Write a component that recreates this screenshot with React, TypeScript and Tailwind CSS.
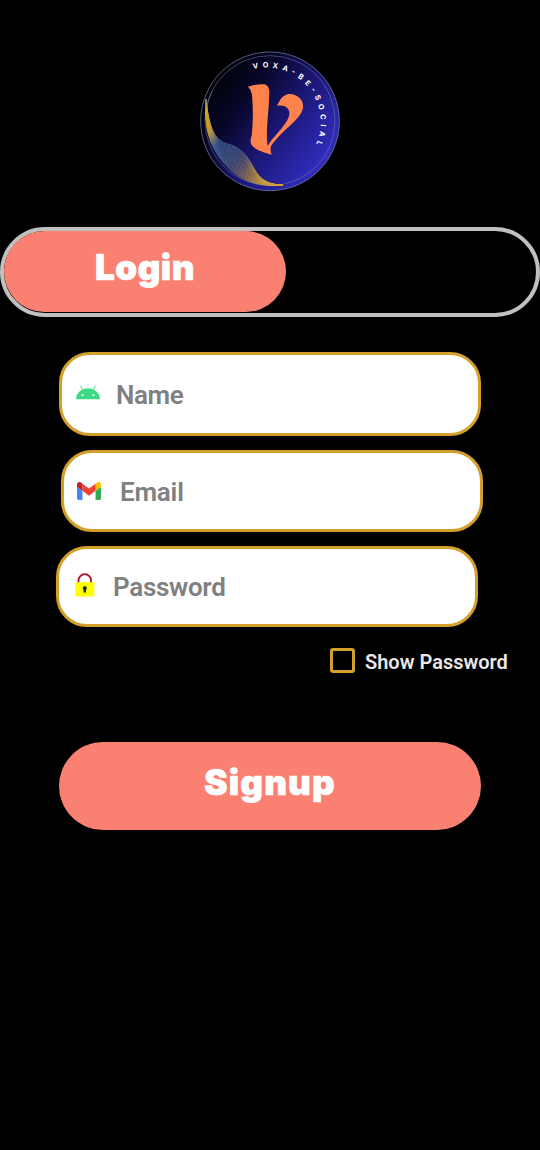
import React from "react";

type Point = [number, number];

const outerWave: Point[] = [[47, 172], [44, 255], [54, 310], [104, 366], [150, 416], [205, 436], [278, 429]];
const innerWave: Point[] = [[48, 172], [56, 240], [66, 290], [108, 304], [212, 330], [164, 424], [278, 430]];

const waveLines = Array.from({ length: 23 }, (_, i) => {
  const t = i / 22;
  const p = outerWave.map(([x, y], k) => {
    const [u, v] = innerWave[k];
    return `${(x + (u - x) * t).toFixed(1)} ${(y + (v - y) * t).toFixed(1)}`;
  });
  return `M${p[0]} C${p[1]} ${p[2]} ${p[3]} C${p[4]} ${p[5]} ${p[6]}`;
});

function Logo() {
  return (
    <svg className="h-[141px] w-[140px]" viewBox="30 27 420 423" role="img" aria-label="Voxa">
      <defs>
        <linearGradient id="disc" x1="60" y1="120" x2="400" y2="370" gradientUnits="userSpaceOnUse">
          <stop offset="0" stopColor="#010106" />
          <stop offset="0.28" stopColor="#08072c" />
          <stop offset="0.6" stopColor="#1c1878" />
          <stop offset="1" stopColor="#322dc0" />
        </linearGradient>
        <linearGradient id="wave" x1="45" y1="165" x2="280" y2="432" gradientUnits="userSpaceOnUse">
          <stop offset="0" stopColor="#5d8fb5" />
          <stop offset="0.1" stopColor="#f0bd20" />
          <stop offset="0.24" stopColor="#e5b83a" />
          <stop offset="0.37" stopColor="#4a78b8" />
          <stop offset="0.55" stopColor="#7390a3" />
          <stop offset="0.74" stopColor="#e0b02c" />
          <stop offset="1" stopColor="#f0b823" />
        </linearGradient>
        <path id="motto" d="M190 81 A164 164 0 0 1 374 316" />
      </defs>
      <circle cx="240" cy="238" r="208" fill="url(#disc)" stroke="#8388b5" strokeWidth="2" />
      <circle cx="240" cy="236" r="195" fill="none" stroke="#7378ad" strokeWidth="1.6" />
      <path d="M66 148 Q52 176 48 205" fill="none" stroke="#6f9fc0" strokeWidth="2.5" opacity="0.6" />
      <g fill="none" stroke="url(#wave)" strokeWidth="2" opacity="0.85">
        {waveLines.map((d) => <path key={d} d={d} />)}
      </g>
      <path
        d="M174 134 Q200 125 224 127 Q239 132 238 155 C237 210 226 265 233 313 C248 284 294 248 298 217 C300 198 283 187 261 192 C270 170 283 155 300 156 C324 157 342 176 339 197 C333 234 275 263 243 313 Q240 323 245 338 C220 330 196 324 185 309 Q178 300 185 281 C190 238 189 193 186 158 Q184 143 174 134Z"
        fill="#ff824d"
      />
      <text className="font-['Inter',sans-serif] font-bold" fill="#fff" fontSize="22">
        <textPath href="#motto" textLength="364" lengthAdjust="spacing">VOXA-BE-SOCIAL</textPath>
      </text>
    </svg>
  );
}

function AndroidIcon() {
  return (
    <svg className="-mt-1 h-[15px] w-6" viewBox="0 0 24 15" aria-hidden="true">
      <path d="M0 14.2C.4 8.4 4.9 3.3 12 3.3S23.6 8.4 24 14.2Z" fill="#3ddc84" />
      <path d="M6.8 5.4 4.7 1M17.2 5.4 19.3 1" stroke="#3ddc84" strokeWidth="0.9" strokeLinecap="round" />
      <circle cx="6.7" cy="10" r="1.1" fill="#fff" />
      <circle cx="17.3" cy="10" r="1.1" fill="#fff" />
    </svg>
  );
}

function MailIcon() {
  return (
    <svg className="h-[18px] w-6" viewBox="52 42 88 66" aria-hidden="true">
      <path fill="#4285f4" d="M58 108h14V74L52 59v43c0 3.32 2.69 6 6 6" />
      <path fill="#34a853" d="M120 108h14c3.32 0 6-2.69 6-6V59l-20 15" />
      <path fill="#fbbc04" d="M120 48v26l20-15v-8c0-7.42-8.47-11.65-14.4-7.2" />
      <path fill="#ea4335" d="M72 74V48l24 18 24-18v26L96 92" />
      <path fill="#c5221f" d="M52 51v8l20 15V48l-5.6-4.2c-5.94-4.45-14.4-.22-14.4 7.2" />
    </svg>
  );
}

function LockIcon() {
  return (
    <svg className="-mt-[3px] h-6 w-5" viewBox="0 0 20 24" aria-hidden="true">
      <path d="M3.5 10V7.5a6.3 6.3 0 0 1 12.6 0V10" fill="none" stroke="#b00b2c" strokeWidth="1.8" />
      <rect x="0.5" y="9.3" width="18.8" height="14.2" rx="1" fill="#ff0" />
      <path d="M9.8 13.1a2.1 2.1 0 0 1 1.2 3.8v2.6H8.6v-2.6a2.1 2.1 0 0 1 1.2-3.8Z" fill="#202820" />
    </svg>
  );
}

const field = "flex w-[422px] items-center rounded-[31px] border-[3px] border-[#d4a02c] bg-white";
const input = "min-w-0 flex-1 bg-transparent font-['Roboto',sans-serif] text-[26px] leading-8 font-semibold outline-none placeholder:text-[#808080] placeholder:opacity-100";
const label = "font-['Inter',sans-serif] leading-[44px] font-black text-white [-webkit-text-stroke:0.7px_white]";

export default function App() {
  return (
    <main className="flex h-[1150px] w-[540px] flex-col overflow-hidden bg-black pt-[51px]">
      <div className="flex justify-center"><Logo /></div>

      <div className="mt-[35px] flex h-[90px] shrink-0 rounded-full border-4 border-[#c0c0c0]">
        <button className="flex h-[81px] w-[282px] justify-center rounded-full bg-[#fa8072] pt-[14px]">
          <span className={`${label} text-[35px] tracking-[0.5px]`}>Login</span>
        </button>
      </div>

      <form className="mt-[35px] flex flex-col" onSubmit={(e) => e.preventDefault()}>
        <label className={`${field} ml-[59px] h-[84px] pl-[14px]`}>
          <AndroidIcon />
          <input className={`${input} mt-0.5 ml-4 tracking-[-0.4px]`} placeholder="Name" />
        </label>
        <label className={`${field} mt-[14px] ml-[61px] h-[82px] pl-[13px]`}>
          <MailIcon />
          <input className={`${input} mt-0.5 ml-[19px] tracking-[-0.2px]`} placeholder="Email" />
        </label>
        <label className={`${field} mt-[14px] ml-[56px] h-[81px] pl-4`}>
          <LockIcon />
          <input className={`${input} ml-[18px] tracking-[-0.3px]`} type="password" placeholder="Password" />
        </label>
        <label className="mt-[21px] ml-[330px] flex h-[25px] items-center gap-[10px]">
          <input type="checkbox" className="h-[25px] w-[25px] appearance-none rounded-[3px] border-[3px] border-[#d4a02c]" />
          <span className="pt-[3px] font-['Roboto',sans-serif] text-[20px] leading-6 font-semibold whitespace-nowrap text-[#e8e8e8]">Show Password</span>
        </label>
        <button className="mt-[69px] ml-[59px] flex h-[88px] w-[422px] justify-center rounded-full bg-[#fa8072] pt-[18px]">
          <span className={`${label} text-[35px] tracking-[1.2px]`}>Signup</span>
        </button>
      </form>
    </main>
  );
}
